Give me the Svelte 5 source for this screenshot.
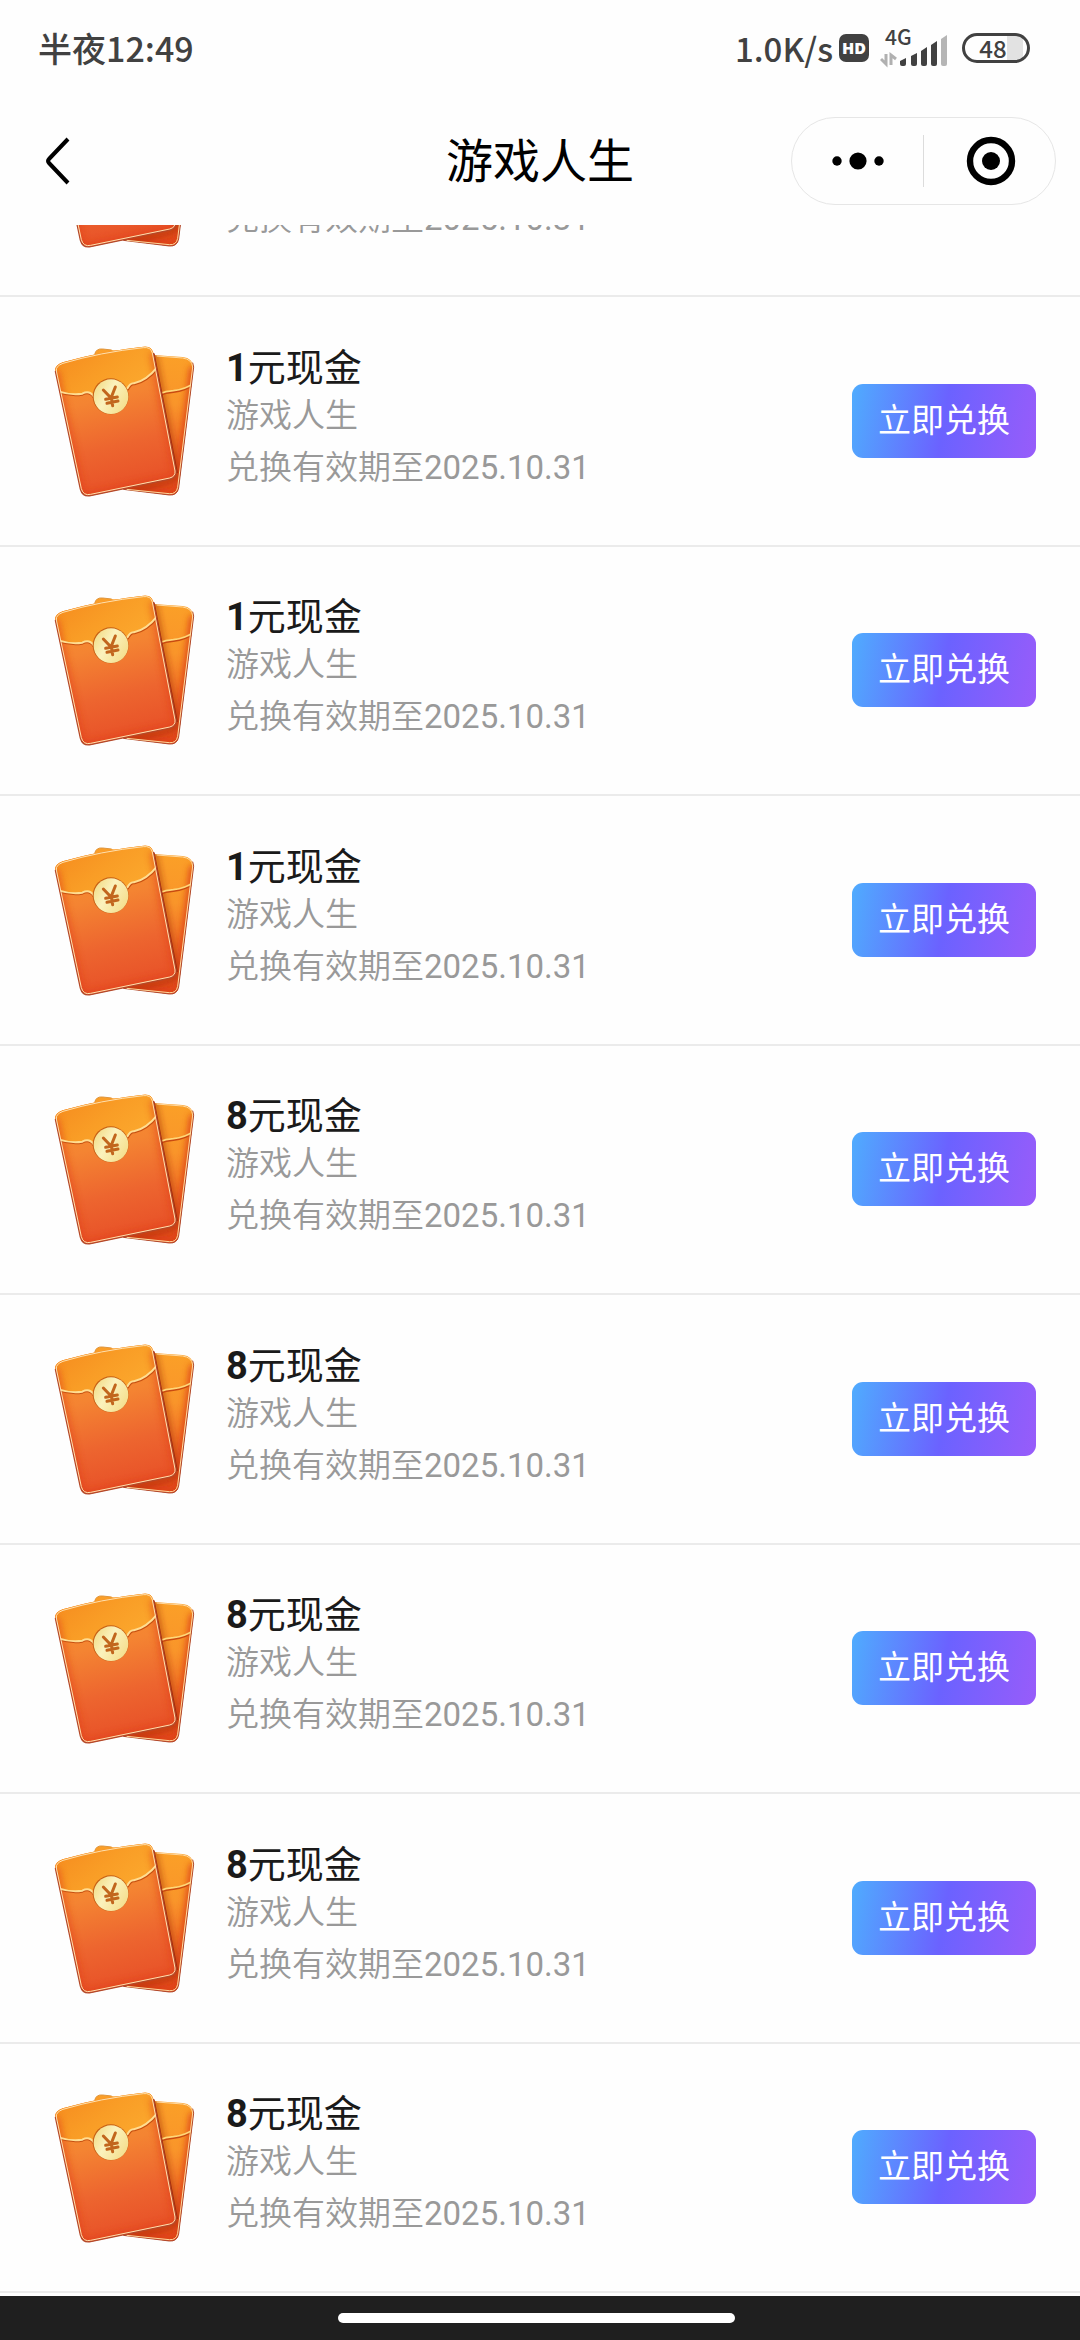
<script>
    const rewards = [1, 1, 1, 8, 8, 8, 8, 8].map((amount, id) => ({
        id,
        amount,
        source: "游戏人生",
        expires: "2025.10.31"
    }));
</script>

<svg class="defs" width="0" height="0" aria-hidden="true">
    <defs>
        <linearGradient id="front" x1="0.4" y1="0" x2="0.6" y2="1">
            <stop offset="0" stop-color="#f9922c"/>
            <stop offset="0.35" stop-color="#f48432"/>
            <stop offset="0.65" stop-color="#ed652f"/>
            <stop offset="1" stop-color="#e64c26"/>
        </linearGradient>
        <linearGradient id="flap" x1="0" y1="0.2" x2="0.8" y2="0.7">
            <stop offset="0" stop-color="#f58a1e"/>
            <stop offset="0.6" stop-color="#f99d26"/>
            <stop offset="1" stop-color="#fba62c"/>
        </linearGradient>
        <linearGradient id="back" x1="0.5" y1="0" x2="0.4" y2="1">
            <stop offset="0" stop-color="#fba127"/>
            <stop offset="0.35" stop-color="#f9952a"/>
            <stop offset="0.65" stop-color="#f06a26"/>
            <stop offset="1" stop-color="#df3b18"/>
        </linearGradient>
        <linearGradient id="coin" x1="0" y1="0" x2="1" y2="0.6">
            <stop offset="0" stop-color="#f0d77c"/>
            <stop offset="0.5" stop-color="#fbf2bd"/>
            <stop offset="1" stop-color="#f5e091"/>
        </linearGradient>
        <filter id="soft" x="-20%" y="-20%" width="140%" height="140%">
            <feGaussianBlur stdDeviation="11"/>
        </filter>
        <clipPath id="frontClip">
            <path d="M76 150Q74 132 98 124Q210 91 340 77Q364 74 370 96L438 450Q440 469 420 474L182 524Q158 529 151 504Z"/>
        </clipPath>
        <clipPath id="backClip">
            <path d="M194 100Q198 82 218 84L250 88L380 103L458 108Q488 112 491 138L446 500Q442 524 418 522L280 505Z"/>
        </clipPath>
        <symbol id="envelope" viewBox="0 0 570 600">
            <g clip-path="url(#backClip)">
                <path d="M180 70H500V540H180Z" fill="url(#back)"/>
                <path d="M491 138L446 500Q442 524 418 522L280 505" fill="none" stroke="#dd4217" stroke-width="22" filter="url(#soft)"/>
                <path d="M370 90L438 450Q440 473 420 479L290 510" fill="none" stroke="#9e250c" stroke-width="10" filter="url(#soft)"/>
                <path d="M386 222Q408 213 430 212Q466 208 490 190" fill="none" stroke="#c94a10" stroke-width="8"/>
                <path d="M386 219Q408 210 430 209Q466 205 490 187" fill="none" stroke="#ffd777" stroke-width="5"/>
            </g>
            <path d="M194 100Q198 82 218 84L245 87" fill="none" stroke="#e0953c" stroke-width="3"/>
            <path d="M488 125L491 138L446 500Q442 524 418 522L280 505" fill="none" stroke="#b0492c" stroke-width="3"/>
            <path d="M380 105L458 111Q486 115 488 138L443 499Q439 520 418 518L290 505" fill="none" stroke="#ffd9a0" stroke-width="3"/>
            <path d="M371 98L441 456" stroke="#a42c0c" stroke-width="6"/>
            <g clip-path="url(#frontClip)">
                <path d="M60 60H450V540H60Z" fill="url(#front)"/>
                <path d="M60 60H400V130Q350 178 308 185Q292 200 285 225H195Q183 208 160 218Q125 224 85 211Z" fill="url(#flap)"/>
                <path d="M76 150L151 504Q158 529 182 524L420 474Q440 469 438 450L370 96" fill="none" stroke="#e03c12" stroke-width="22" opacity=".6" filter="url(#soft)"/>
                <path d="M85 214Q122 226 157 221Q178 210 191 229M293 207Q303 188 314 190Q352 182 385 140" fill="none" stroke="#c75011" stroke-width="6"/>
                <path d="M85 211Q122 223 157 218Q178 207 191 226M291 204Q301 185 312 187Q350 179 383 137" fill="none" stroke="#ffdd91" stroke-width="6"/>
            </g>
            <path d="M76 150L151 504Q158 529 182 524L420 474Q440 469 438 450L370 96" fill="none" stroke="#b4492a" stroke-width="4"/>
            <path d="M79 150Q77 135 99 127Q211 94 340 80Q362 77 367 96L435 450Q437 466 419 471L182 520Q160 525 154 503Z" fill="none" stroke="#ffe0ae" stroke-width="3"/>
            <circle cx="242" cy="226" r="54" fill="#c65f14"/>
            <circle cx="243" cy="227" r="52" fill="url(#coin)"/>
            <path d="M220 207L243 231L256 198M244 231L248 254M227 235L262 228M231 247L264 240" fill="none" stroke="#c2661d" stroke-width="9" stroke-linecap="round"/>
        </symbol>
    </defs>
</svg>

<div class="app">
    <div class="status-bar">
        <span class="clock">半夜12:49</span>
        <div class="status-right">
            <span class="speed">1.0K/s</span>
            <span class="hd">HD</span>
            <svg class="signal" width="68" height="56" viewBox="0 -10 68 56" aria-label="4G">
                <text x="5" y="17">4G</text>
                <path d="M6 26V36L1 31M11 37V27L16 31" fill="none" stroke="#b0b0b0" stroke-width="3"/>
                <g fill="#414141">
                    <path d="M20 33L26 30V36Q26 38 24 38H22Q20 38 20 36Z"/>
                    <path d="M31 28L37 25V36Q37 38 35 38H33Q31 38 31 36Z"/>
                    <path d="M41 23L47 19V36Q47 38 45 38H43Q41 38 41 36Z"/>
                    <path d="M51 17L57 13V36Q57 38 55 38H53Q51 38 51 36Z"/>
                </g>
                <path d="M61 11L67 7V36Q67 38 65 38H63Q61 38 61 36Z" fill="#b5b5b5"/>
            </svg>
            <span class="battery">48</span>
        </div>
    </div>

    <header>
        <button class="back" aria-label="返回">
            <svg width="24" height="48" viewBox="0 0 24 48">
                <path d="M22 2L3 22Q1 24 3 26L22 46" fill="none" stroke="#000" stroke-width="4"/>
            </svg>
        </button>
        <h1>游戏人生</h1>
        <div class="capsule">
            <button aria-label="更多">
                <svg width="54" height="54" viewBox="0 0 54 54">
                    <circle cx="6" cy="27" r="4.7"/>
                    <circle cx="27" cy="27" r="8.6"/>
                    <circle cx="48" cy="27" r="4.7"/>
                </svg>
            </button>
            <button aria-label="关闭">
                <svg width="54" height="54" viewBox="0 0 54 54">
                    <circle cx="28" cy="27" r="21" fill="none" stroke="#000" stroke-width="6.4"/>
                    <circle cx="28" cy="27" r="9"/>
                </svg>
            </button>
        </div>
    </header>

    <ul>
        <!-- scrolled-away row, only its tail is left under the header -->
        <li class="scrolled">
            <div class="row">
                <svg class="envelope" width="190" height="200" aria-hidden="true"><use href="#envelope"/></svg>
                <div class="info">
                    <p class="expires">兑换有效期至<time>2025.10.31</time></p>
                </div>
            </div>
        </li>
        {#each rewards as reward (reward.id)}
            <li>
                <div class="row">
                    <svg class="envelope" width="190" height="200" aria-hidden="true"><use href="#envelope"/></svg>
                    <div class="info">
                        <h2><b>{reward.amount}</b>元现金</h2>
                        <p class="source">{reward.source}</p>
                        <p class="expires">兑换有效期至<time>{reward.expires}</time></p>
                    </div>
                    <button class="redeem">立即兑换</button>
                </div>
            </li>
        {/each}
    </ul>

    <footer><div class="home-bar"></div></footer>
</div>

<style>
    :global(body){
        background: #fefefe;
    }
    .defs{
        position: absolute;
    }
    .app{
        display: flex;
        flex-direction: column;
        min-height: 100vh;
        font-family: Roboto, "Noto Sans CJK SC", sans-serif;
        color: #1a1a1a;
    }
    button{
        border: none;
        padding: 0;
        background: none;
        font-family: inherit;
        cursor: pointer;
    }
    .status-bar{
        display: flex;
        justify-content: space-between;
        align-items: center;
        height: 97px;
        padding: 0 50px 2px 38px;
        box-sizing: border-box;
        font-family: "Noto Sans CJK SC", sans-serif;
        font-size: 34px;
        font-weight: 500;
        color: #414141;
    }
    .status-right{
        display: flex;
        align-items: center;
    }
    .speed{
        font-size: 33px;
    }
    .hd{
        width: 30px;
        height: 28px;
        margin: 0 11px 0 6px;
        border-radius: 7px;
        background: #414141;
        color: #fefefe;
        font-family: "Open Sans", sans-serif;
        font-size: 16px;
        font-weight: 800;
        line-height: 28px;
        text-align: center;
    }
    .signal{
        margin-right: 14px;
        padding-bottom: 4px;
    }
    .signal text{
        font-size: 21px;
        fill: #414141;
    }
    .battery{
        width: 68px;
        height: 30px;
        box-sizing: border-box;
        border: 3px solid #414141;
        border-radius: 15px;
        padding-right: 6px;
        background: linear-gradient(90deg, #fefefe 42px, #e2e2e2 42px) 0 0 / 58px 100% no-repeat;
        font-size: 24px;
        line-height: 24px;
        text-align: center;
    }
    header{
        display: grid;
        grid-template-columns: 1fr auto 1fr;
        align-items: center;
        height: 128px;
        padding: 0 24px 0 46px;
        box-sizing: border-box;
    }
    .back{
        justify-self: start;
        display: flex;
    }
    h1{
        margin: 2px 0 0 -22px;
        font-size: 47px;
        font-weight: 400;
        line-height: 64px;
        color: #000;
    }
    .capsule{
        justify-self: end;
        display: flex;
        align-items: center;
        width: 265px;
        height: 88px;
        box-sizing: border-box;
        border: 1px solid #e6e6e6;
        border-radius: 44px;
    }
    .capsule button{
        flex: 1;
        display: flex;
        justify-content: center;
        align-items: center;
        height: 52px;
    }
    .capsule button + button{
        border-left: 1px solid #dcdcdc;
    }
    ul{
        flex: 1;
        display: flex;
        flex-direction: column;
        margin: 0;
        padding: 0 0 3px;
        list-style: none;
    }
    li{
        flex: 1;
        display: flex;
        align-items: center;
        border-bottom: 2px solid #ebebeb;
    }
    .row{
        flex: 1;
        display: flex;
        align-items: center;
        height: 247px;
        padding: 0 44px 0 30px;
    }
    .envelope{
        flex: none;
        margin-right: 6px;
    }
    .info{
        flex: 1;
        padding-bottom: 2px;
    }
    .scrolled{
        flex: 0 0 70px;
        align-items: flex-end;
        overflow: hidden;
    }
    .scrolled .info{
        padding-top: 96px;
    }
    h2, p{
        margin: 0;
    }
    h2{
        font-size: 38px;
        font-weight: 400;
        line-height: 46px;
    }
    p{
        font-size: 33px;
        font-weight: 350;
        color: #999;
    }
    time{
        font-weight: 400;
    }
    .source{
        line-height: 50px;
    }
    .expires{
        line-height: 54px;
    }
    .redeem{
        width: 184px;
        height: 74px;
        padding-bottom: 6px;
        border-radius: 11px;
        background: linear-gradient(100deg, #4facfe 0%, #6b62ff 50%, #985cfa 100%);
        color: #fff;
        font-size: 33px;
    }
    footer{
        display: flex;
        justify-content: center;
        height: 44px;
        padding: 17px 7px 0 0;
        box-sizing: border-box;
        background: #1f1f1f;
    }
    .home-bar{
        width: 37%;
        height: 10px;
        border-radius: 5px;
        background: #fff;
    }
</style>
